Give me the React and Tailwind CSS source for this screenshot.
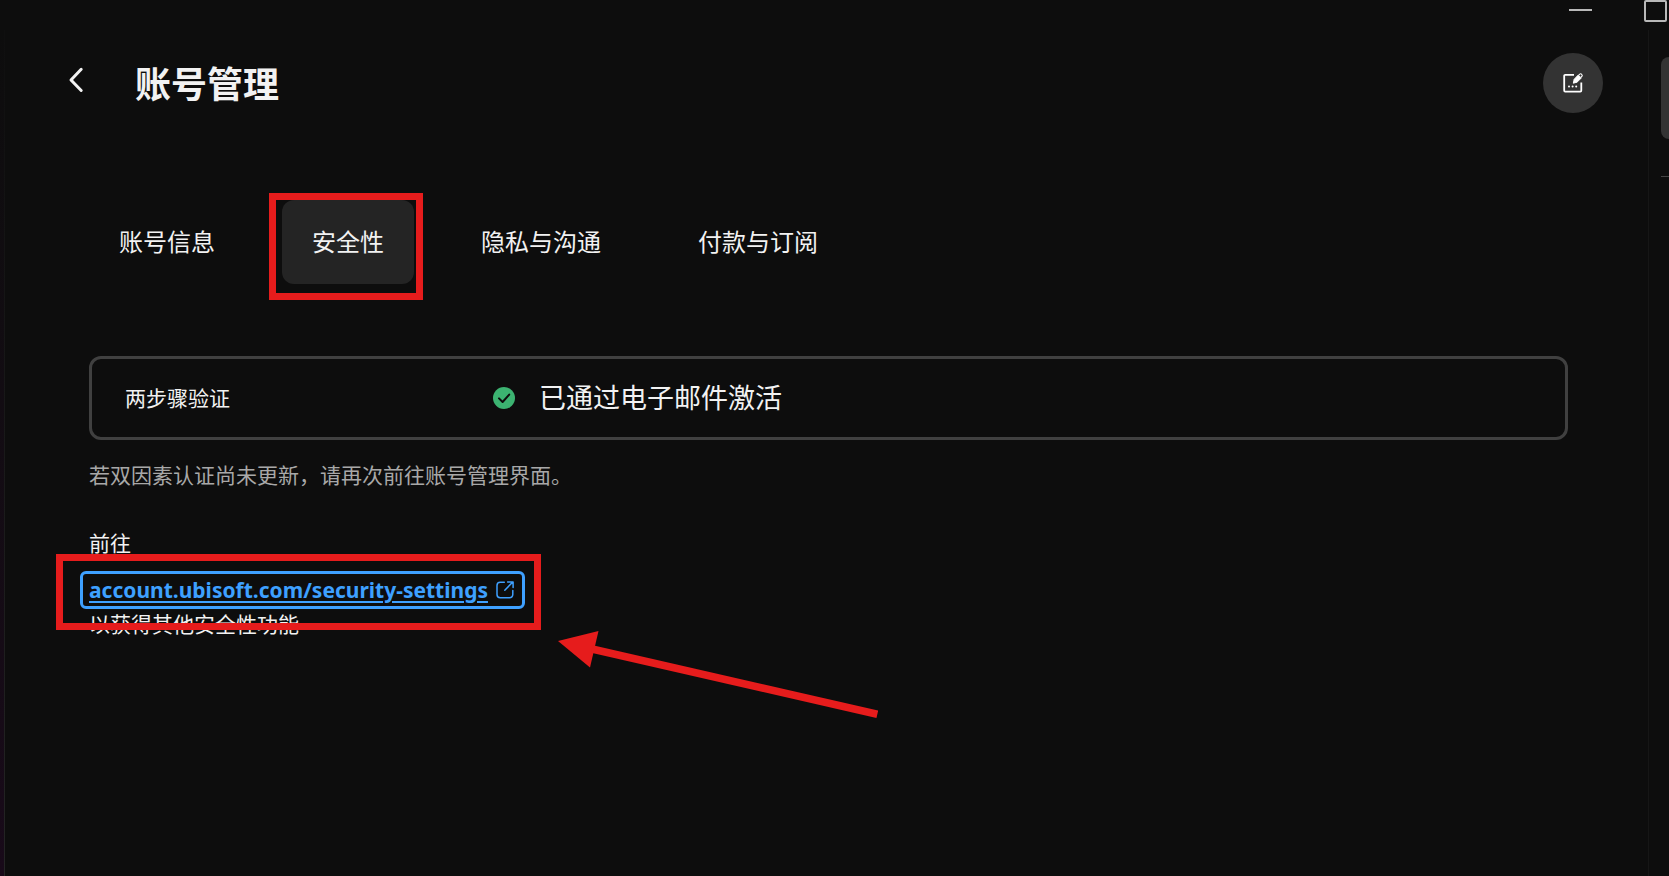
import React, { useState } from 'react';

const TABS = ['账号信息', '安全性', '隐私与沟通', '付款与订阅'];

const TitleBar = () => (
  <div className="h-[30px] flex justify-end items-start gap-[52px] pr-0.5">
    <button aria-label="最小化" className="w-6 h-5 flex items-center justify-center">
      <span className="w-[23px] h-0.5 bg-[#b8b8b8]" />
    </button>
    <button aria-label="最大化" className="w-[23px] h-[22px] border-2 border-[#b8b8b8] rounded-xs" />
  </div>
);

const BackIcon = () => (
  <svg className="w-4 h-[26px]" viewBox="0 0 16 26" fill="none" stroke="#f2f2f2" strokeWidth="3" strokeLinecap="round" strokeLinejoin="round">
    <path d="M13.2 2.3 3 13l10.2 10.5" />
  </svg>
);

const EditIcon = () => (
  <svg className="w-5 h-5" viewBox="0 0 20 20" fill="none">
    <path d="M11 1.9H2.2a1 1 0 0 0-1 1v14.7a1 1 0 0 0 1 1h15.1a1 1 0 0 0 1-1V9.5" stroke="#fff" strokeWidth="1.8" />
    <path d="M15.2 2.1 18.3 5 14 9.2l-3.7 1 .9-3.9z" fill="#fff" stroke="#fff" strokeWidth="1" strokeLinejoin="round" />
    <path d="m15.8 2 .9-.8a1.3 1.3 0 0 1 1.8 0l.3.4a1.3 1.3 0 0 1 0 1.8l-.9.9" stroke="#fff" strokeWidth="1.1" />
    <g fill="#fff">
      <circle cx="6" cy="13.4" r="1" />
      <circle cx="9.6" cy="13.4" r="1" />
      <circle cx="13.2" cy="13.4" r="1" />
    </g>
  </svg>
);

const CheckIcon = () => (
  <svg className="w-[22px] h-[22px]" viewBox="0 0 22 22" fill="none">
    <circle cx="11" cy="11" r="11" fill="#3cb371" />
    <path d="m6 11.4 3.6 3.6 6.6-7.4" stroke="#0d0d0d" strokeWidth="2" strokeLinecap="round" strokeLinejoin="round" />
  </svg>
);

const ExternalIcon = () => (
  <svg className="w-[18px] h-[18px]" viewBox="0 0 18 18" fill="none" stroke="#3ea0ff" strokeWidth="1.5" strokeLinecap="round" strokeLinejoin="round">
    <path d="M8.3 1.2H4.2a3.2 3.2 0 0 0-3.2 3.2v9.2a3.2 3.2 0 0 0 3.2 3.2h9.4a3.2 3.2 0 0 0 3.2-3.2V9.4" />
    <path d="m8.8 9.2 8-8.2M11.6.9h5.5v5.5" />
  </svg>
);

const Arrow = () => (
  <svg className="absolute left-[478px] top-[60px] w-[320px] h-[88px]" viewBox="0 0 320 88" fill="#e61c1c" aria-hidden="true">
    <path d="M0 10 40.5 0 32 36.5z" />
    <path d="M34 18 319.3 83.3" stroke="#e61c1c" strokeWidth="7.5" />
  </svg>
);

const App = () => {
  const [activeTab, setActiveTab] = useState('安全性');

  return (
    <div className="min-h-screen flex flex-col overflow-hidden bg-[#0d0d0d] text-[#f2f2f2] font-['Noto_Sans','Noto_Sans_CJK_SC',sans-serif]">
      <TitleBar />

      <div className="flex-1 flex">
        <div className="w-1 bg-linear-to-b from-[#0d0d0d] to-[#180a19]" />
        <div className="w-px bg-linear-to-b from-[#0f0f0f] to-[#242424]" />

        <main className="flex-1 min-w-0">
          {/* Header */}
          <header className="flex items-start pt-[23px] pl-[63px] pr-[45px]">
            <button aria-label="返回" className="w-4 h-[54px] flex items-center">
              <BackIcon />
            </button>
            <h1 className="flex-1 ml-[51px] text-4xl leading-[64px] font-bold">账号管理</h1>
            <button aria-label="编辑" className="w-[60px] h-[60px] rounded-full bg-[#333333] flex items-center justify-center">
              <EditIcon />
            </button>
          </header>

          {/* Tabs */}
          <nav className="flex gap-[37px] mt-[83px] pl-[84px]">
            {TABS.map((tab) => (
              <button
                key={tab}
                onClick={() => setActiveTab(tab)}
                className={`relative h-[84px] px-[30px] text-2xl rounded-xl ${tab === activeTab ? 'bg-[#242424]' : ''}`}
              >
                {tab}
                {tab === '安全性' && (
                  <span className="absolute -left-[13px] -right-[9px] -top-[7px] -bottom-4 border-[7px] border-[#e61c1c]" />
                )}
              </button>
            ))}
          </nav>

          <section className="mt-[72px] pl-[84px] pr-20 text-[21px] leading-[30px]">
            <div className="h-[84px] flex items-center border-[3px] border-[#404040] rounded-xl pl-[33px]">
              <h2 className="w-[368px]">两步骤验证</h2>
              <CheckIcon />
              <span className="ml-6 text-[27px]">已通过电子邮件激活</span>
            </div>

            <p className="mt-5 text-[#a8a8a8]">若双因素认证尚未更新，请再次前往账号管理界面。</p>

            <p className="mt-[38px]">前往</p>
            <div className="relative mt-[13px] -ml-[9px] w-fit">
              <a
                href="#security-settings"
                className="flex items-center gap-2 h-[38px] pl-1.5 pr-2 border-[3px] border-[#3ea0ff] rounded-md text-[#3ea0ff] font-bold"
              >
                <span className="underline decoration-2 underline-offset-3">account.ubisoft.com/security-settings</span>
                <ExternalIcon />
              </a>
              <div className="absolute z-10 -left-6 -right-4 -top-[17px] -bottom-[21px] border-[7px] border-[#e61c1c]" />
              <Arrow />
            </div>
            <p>以获得其他安全性功能</p>
          </section>
        </main>

        {/* Scrollbar rail */}
        <aside className="w-[21px] border-l border-[#161616] pt-[27px] pl-3">
          <div className="h-[82px] rounded-l-lg bg-[#333333]" />
          <div className="mt-[37px] h-px bg-[#444444]" />
        </aside>
      </div>
    </div>
  );
};

export default App;
